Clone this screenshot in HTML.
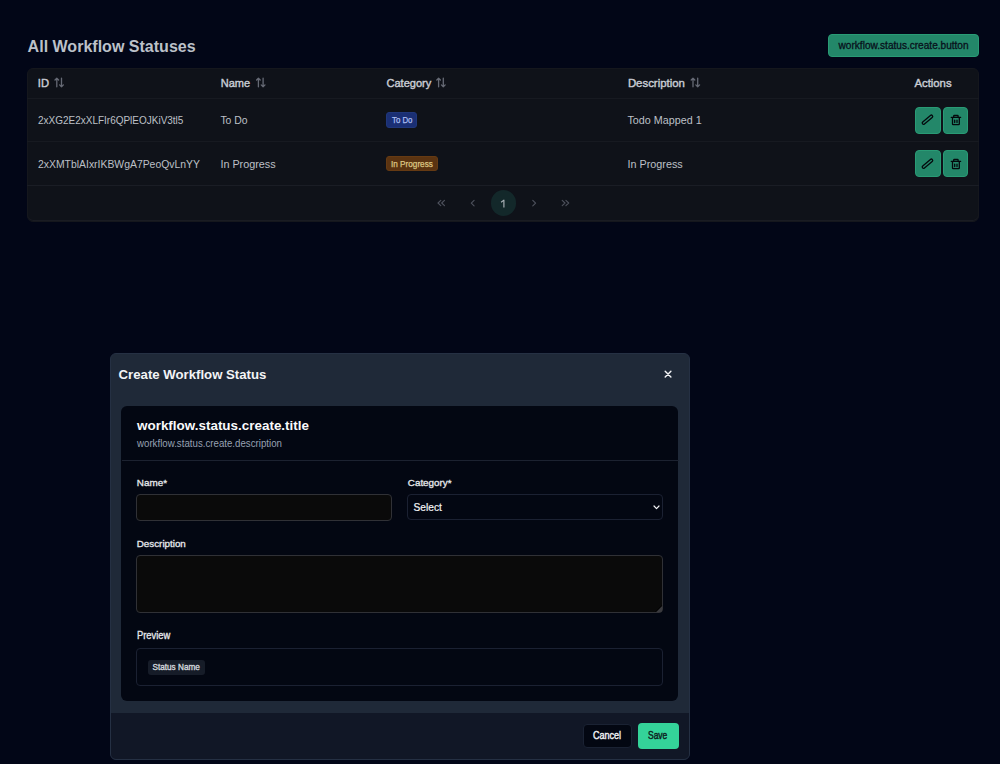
<!DOCTYPE html>
<html><head><meta charset="utf-8"><style>
html,body{margin:0;padding:0;width:1000px;height:764px;overflow:hidden;background:#020617;}
body{position:relative;font-family:"Liberation Sans",sans-serif;}
.t{position:absolute;white-space:pre;}
.r{position:absolute;}
svg.r{overflow:visible;}
</style></head><body>
<div class="t" style="left:27.6px;top:38.17px;font-size:16.05px;line-height:17.928px;color:#bcc1c9;font-weight:700;">All Workflow Statuses</div>
<div class="r" style="left:828px;top:34px;width:151.00px;height:23.20px;background:#238769;border-radius:4px;border:1px solid #299b75;box-sizing:border-box;"></div>
<div class="t" style="left:838.6px;top:39.68px;font-size:10.08px;line-height:11.259px;color:#08111c;font-weight:400;-webkit-text-stroke:0.3px #08111c;">workflow.status.create.button</div>
<div class="r" style="left:27.2px;top:68px;width:951.80px;height:154.00px;background:#0f1219;border-radius:6px;border:1px solid #15171d;box-sizing:border-box;box-shadow:inset 0 -1px 0 #1a1c23;"></div>
<div class="r" style="left:27.2px;top:98px;width:951.80px;height:1.00px;background:#171a21;border-radius:0px;"></div>
<div class="r" style="left:27.2px;top:141px;width:951.80px;height:1.00px;background:#171a21;border-radius:0px;"></div>
<div class="r" style="left:27.2px;top:184.5px;width:951.80px;height:1.00px;background:#1a1d25;border-radius:0px;"></div>
<div class="t" style="left:37.8px;top:76.86px;font-size:11.2px;line-height:12.510px;color:#c9cdd5;font-weight:400;-webkit-text-stroke:0.4px #c9cdd5;">ID</div>
<div class="t" style="left:220.8px;top:77.05px;font-size:11.0px;line-height:12.287px;color:#c9cdd5;font-weight:400;-webkit-text-stroke:0.4px #c9cdd5;">Name</div>
<div class="t" style="left:386.5px;top:77.00px;font-size:11.05px;line-height:12.343px;color:#c9cdd5;font-weight:400;-webkit-text-stroke:0.4px #c9cdd5;">Category</div>
<div class="t" style="left:627.9px;top:76.68px;font-size:11.4px;line-height:12.734px;color:#c9cdd5;font-weight:400;-webkit-text-stroke:0.4px #c9cdd5;">Description</div>
<svg class="r" style="left:0;top:0" width="1000" height="764" viewBox="0 0 1000 764"><g stroke="#666a75" stroke-width="1.3" fill="none" stroke-linecap="round" stroke-linejoin="round"><path d="M56.80 78.2V86.8M55.00 80L56.80 78.2L58.60 80"/><path d="M61.50 78.1V86.8M59.60 84.9L61.50 86.8L63.40 84.9"/><path d="M258.40 78.2V86.8M256.60 80L258.40 78.2L260.20 80"/><path d="M263.10 78.1V86.8M261.20 84.9L263.10 86.8L265.00 84.9"/><path d="M438.60 78.2V86.8M436.80 80L438.60 78.2L440.40 80"/><path d="M443.30 78.1V86.8M441.40 84.9L443.30 86.8L445.20 84.9"/><path d="M693.00 78.2V86.8M691.20 80L693.00 78.2L694.80 80"/><path d="M697.70 78.1V86.8M695.80 84.9L697.70 86.8L699.60 84.9"/></g></svg>
<div class="t" style="left:914.4px;top:76.73px;font-size:11.35px;line-height:12.678px;color:#c9cdd5;font-weight:400;-webkit-text-stroke:0.4px #c9cdd5;">Actions</div>
<div class="t" style="left:38px;top:114.96px;font-size:9.99px;line-height:11.159px;color:#bdc0c7;font-weight:400;">2xXG2E2xXLFIr6QPlEOJKiV3tl5</div>
<div class="t" style="left:220.4px;top:114.58px;font-size:10.41px;line-height:11.628px;color:#bdc0c7;font-weight:400;">To Do</div>
<div class="r" style="left:386px;top:112.4px;width:31.20px;height:15.50px;background:#1a2f74;border-radius:3px;border:1px solid #20377b;box-sizing:border-box;"></div>
<div class="t" style="left:391.5px;top:115.60px;font-size:8.4px;line-height:9.383px;color:#a9bdf0;font-weight:400;-webkit-text-stroke:0.25px #a9bdf0;transform:scaleX(0.935);transform-origin:0 0;">To Do</div>
<div class="t" style="left:627.5px;top:114.26px;font-size:10.76px;line-height:12.019px;color:#bdc0c7;font-weight:400;">Todo Mapped 1</div>
<div class="t" style="left:38px;top:158.58px;font-size:10.41px;line-height:11.628px;color:#bdc0c7;font-weight:400;">2xXMTblAIxrIKBWgA7PeoQvLnYY</div>
<div class="t" style="left:220.4px;top:158.22px;font-size:10.81px;line-height:12.075px;color:#bdc0c7;font-weight:400;">In Progress</div>
<div class="r" style="left:386px;top:155.5px;width:52.20px;height:15.40px;background:#5a3311;border-radius:3px;border:1px solid #653a13;box-sizing:border-box;"></div>
<div class="t" style="left:391.2px;top:159.90px;font-size:8.4px;line-height:9.383px;color:#dcc583;font-weight:400;-webkit-text-stroke:0.25px #dcc583;transform:scaleX(0.977);transform-origin:0 0;">In Progress</div>
<div class="t" style="left:627.5px;top:158.22px;font-size:10.81px;line-height:12.075px;color:#bdc0c7;font-weight:400;">In Progress</div>
<div class="r" style="left:914.5px;top:106.5px;width:26.10px;height:27.00px;background:#238769;border-radius:4px;border:1px solid #299b75;box-sizing:border-box;"></div><div class="r" style="left:942.6px;top:106.5px;width:25.90px;height:27.00px;background:#238769;border-radius:4px;border:1px solid #299b75;box-sizing:border-box;"></div><svg class="r" style="left:0;top:0.0px" width="1000" height="200" viewBox="0 0 1000 200"><g transform="translate(927.45 119.7) rotate(-40)"><rect x="-6.4" y="-1.35" width="12.8" height="2.7" rx="1.35" fill="none" stroke="#04090d" stroke-width="1.3"/></g><g fill="none" stroke="#04090d" stroke-width="1.3" stroke-linecap="round" stroke-linejoin="round"><path d="M951.3 117.4H960.6"/><path d="M953.7 117.2V116.1Q953.7 115.5 954.3 115.5H957.5Q958.1 115.5 958.1 116.1V117.2"/><path d="M952.5 117.6V124Q952.5 124.7 953.2 124.7H958.6Q959.3 124.7 959.3 124V117.6"/><path d="M954.7 120.1V122.6M957.0 120.1V122.6"/></g></svg>
<div class="r" style="left:914.5px;top:150px;width:26.10px;height:27.00px;background:#238769;border-radius:4px;border:1px solid #299b75;box-sizing:border-box;"></div><div class="r" style="left:942.6px;top:150px;width:25.90px;height:27.00px;background:#238769;border-radius:4px;border:1px solid #299b75;box-sizing:border-box;"></div><svg class="r" style="left:0;top:43.5px" width="1000" height="200" viewBox="0 0 1000 200"><g transform="translate(927.45 119.7) rotate(-40)"><rect x="-6.4" y="-1.35" width="12.8" height="2.7" rx="1.35" fill="none" stroke="#04090d" stroke-width="1.3"/></g><g fill="none" stroke="#04090d" stroke-width="1.3" stroke-linecap="round" stroke-linejoin="round"><path d="M951.3 117.4H960.6"/><path d="M953.7 117.2V116.1Q953.7 115.5 954.3 115.5H957.5Q958.1 115.5 958.1 116.1V117.2"/><path d="M952.5 117.6V124Q952.5 124.7 953.2 124.7H958.6Q959.3 124.7 959.3 124V117.6"/><path d="M954.7 120.1V122.6M957.0 120.1V122.6"/></g></svg>
<svg class="r" style="left:0;top:0" width="1000" height="764" viewBox="0 0 1000 764"><g fill="none" stroke="#4d515c" stroke-width="1.15" stroke-linecap="round" stroke-linejoin="round"><path d="M440.8 200.4L438 203L440.8 205.6M444.5 200.4L441.7 203L444.5 205.6"/><path d="M474.1 200.4L471.3 203.1L474.1 205.8"/><path d="M532.8 200.4L535.6 203.1L532.8 205.8"/><path d="M562.2 200.4L565 203L562.2 205.6M565.9 200.4L568.7 203L565.9 205.6"/></g></svg>
<div class="r" style="left:490.8px;top:190.4px;width:25.20px;height:25.20px;background:#13282a;border-radius:12.6px;"></div>
<svg class="r" style="left:0;top:0" width="1000" height="764" viewBox="0 0 1000 764"><path d="M503.9 207.6V200.1L501.1 202.3" fill="none" stroke="#aab2b7" stroke-width="1.15" stroke-linejoin="round"/></svg>
<div class="r" style="left:110px;top:353px;width:580.00px;height:407.00px;background:#1f2938;border-radius:6px;border:1px solid #253043;box-sizing:border-box;"></div>
<div class="t" style="left:118.6px;top:368.25px;font-size:13.2px;line-height:14.744px;color:#f3f4f6;font-weight:700;">Create Workflow Status</div>
<svg class="r" style="left:0;top:0" width="1000" height="764" viewBox="0 0 1000 764"><path d="M665.2 371.3L670.9 377M670.9 371.3L665.2 377" stroke="#f3f4f6" stroke-width="1.45" stroke-linecap="round"/></svg>
<div class="r" style="left:121.4px;top:406px;width:556.90px;height:295.20px;background:#030712;border-radius:6px;"></div>
<div class="t" style="left:137px;top:418.24px;font-size:13.44px;line-height:15.012px;color:#f9fafb;font-weight:700;">workflow.status.create.title</div>
<div class="t" style="left:137px;top:438.29px;font-size:10.4px;line-height:11.617px;color:#97a1b2;font-weight:400;transform:scaleX(0.933);transform-origin:0 0;">workflow.status.create.description</div>
<div class="r" style="left:121.5px;top:460px;width:557.00px;height:1.00px;background:#1c2230;border-radius:0px;"></div>
<div class="t" style="left:136.8px;top:477.04px;font-size:9.9px;line-height:11.058px;color:#e5e7eb;font-weight:400;-webkit-text-stroke:0.32px #e5e7eb;">Name*</div>
<div class="r" style="left:136.3px;top:494px;width:255.70px;height:26.80px;background:#0a0a0a;border-radius:4px;border:1px solid #303136;box-sizing:border-box;"></div>
<div class="t" style="left:407.8px;top:477.49px;font-size:9.85px;line-height:11.002px;color:#e5e7eb;font-weight:400;-webkit-text-stroke:0.32px #e5e7eb;">Category*</div>
<div class="r" style="left:407.2px;top:494px;width:255.60px;height:25.60px;background:#030712;border-radius:4px;border:1px solid #1b2132;box-sizing:border-box;"></div>
<div class="t" style="left:413.5px;top:501.97px;font-size:10.2px;line-height:11.393px;color:#f3f4f6;font-weight:400;-webkit-text-stroke:0.2px #f3f4f6;">Select</div>
<svg class="r" style="left:0;top:0" width="1000" height="764" viewBox="0 0 1000 764"><path d="M654 506L656.5 508.6L659 506" stroke="#f3f4f6" stroke-width="1.2" fill="none" stroke-linecap="round" stroke-linejoin="round"/></svg>
<div class="t" style="left:136.8px;top:539.13px;font-size:9.8px;line-height:10.947px;color:#e5e7eb;font-weight:400;-webkit-text-stroke:0.32px #e5e7eb;">Description</div>
<div class="r" style="left:136.3px;top:555px;width:526.50px;height:57.80px;background:#0a0a0a;border-radius:4px;border:1px solid #303136;box-sizing:border-box;"></div>
<svg class="r" style="left:0;top:0" width="1000" height="764" viewBox="0 0 1000 764"><path d="M656 612.2L662.2 606V610.5Q662.2 612.2 660.5 612.2Z" fill="#3a3a3e"/><path d="M655.4 611.8L661.8 605.4" stroke="#000" stroke-width="0.7"/></svg>
<div class="t" style="left:136.8px;top:630.06px;font-size:10.1px;line-height:11.282px;color:#e5e7eb;font-weight:400;-webkit-text-stroke:0.32px #e5e7eb;transform:scaleX(0.927);transform-origin:0 0;">Preview</div>
<div class="r" style="left:136.3px;top:647.5px;width:526.30px;height:38.00px;background:#030712;border-radius:4px;border:1px solid #1b2132;box-sizing:border-box;"></div>
<div class="r" style="left:147.5px;top:660px;width:57.50px;height:15.00px;background:#161c28;border-radius:3px;"></div>
<div class="t" style="left:152.5px;top:663.28px;font-size:8.2px;line-height:9.159px;color:#d1d5db;font-weight:400;-webkit-text-stroke:0.35px #d1d5db;">Status Name</div>
<div class="r" style="left:111px;top:713px;width:578.00px;height:46.00px;background:#111726;border-radius:0px;border-radius:0 0 5px 5px;"></div>
<div class="r" style="left:583px;top:724px;width:49.00px;height:24.00px;background:#030712;border-radius:4px;border:1px solid #1a2233;box-sizing:border-box;"></div>
<div class="t" style="left:593.1px;top:730.21px;font-size:10.6px;line-height:11.840px;color:#f3f4f6;font-weight:400;-webkit-text-stroke:0.4px #f3f4f6;transform:scaleX(0.85);transform-origin:0 0;">Cancel</div>
<div class="r" style="left:638px;top:723px;width:41.00px;height:25.70px;background:#34d399;border-radius:4px;"></div>
<div class="t" style="left:648.3px;top:730.21px;font-size:10.6px;line-height:11.840px;color:#0c2220;font-weight:400;-webkit-text-stroke:0.45px #0c2220;transform:scaleX(0.80);transform-origin:0 0;">Save</div>
</body></html>
